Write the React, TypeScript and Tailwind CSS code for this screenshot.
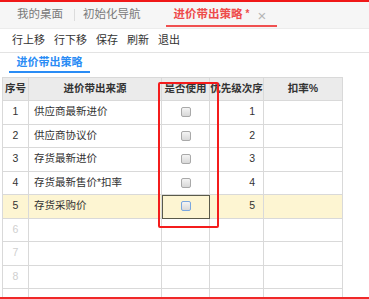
import React from 'react';

const rows = [
    { no: 1, name: '供应商最新进价', order: 1 },
    { no: 2, name: '供应商协议价', order: 2 },
    { no: 3, name: '存货最新进价', order: 3 },
    { no: 4, name: '存货最新售价*扣率', order: 4 },
    { no: 5, name: '存货采购价', order: 5, active: true },
];

const Checkbox: React.FC<{ focused?: boolean }> = ({ focused }) => (
    <span
        className={`block w-[10px] h-[10px] rounded-[2px] border bg-gradient-to-b from-[#f4f4f4] to-[#d8d8d8] ${
            focused ? 'border-[#7aa7e0]' : 'border-[#a9a9a9]'
        }`}
    />
);

const cell = 'border-r border-b border-[#d9d9d9] flex items-center';

export default function App() {
    return (
        <div
            className="relative w-[369px] h-[299px] overflow-hidden bg-white border-t-2 border-[#f01818] text-[#333]"
            style={{ fontFamily: '"Liberation Sans", "Noto Sans CJK SC", sans-serif' }}
        >
            {/* Tabs */}
            <div className="h-[27px] bg-[#f6f6f6] border-b border-[#ececec] flex items-stretch text-[11.5px]">
                <div className="pl-[17px] pr-[11px] flex items-center text-[#7a7a7a]">我的桌面</div>
                <div className="w-px my-[7px] bg-[#dcdcdc]" />
                <div className="pl-[8px] pr-[25px] flex items-center text-[#7a7a7a]">初始化导航</div>
                <div className="relative w-[111px] pl-[8px] flex items-center font-bold text-[#ee4b4b]">
                    进价带出策略
                    <span className="ml-[3px] text-[10px] -mt-[3px]">*</span>
                    <span className="ml-[8px] text-[#b5b5b5] font-normal text-[15px] leading-none">×</span>
                    <div className="absolute left-0 right-0 bottom-[1px] h-[2px] bg-[#f05050]" />
                </div>
            </div>

            {/* Toolbar */}
            <div className="h-[24px] flex items-center gap-[9px] pl-[12px] text-[11px] text-[#333] border-b border-[#e3e3e3]">
                <span>行上移</span>
                <span>行下移</span>
                <span>保存</span>
                <span>刷新</span>
                <span>退出</span>
            </div>

            {/* Sub tab */}
            <div className="h-[24px] pl-[9px] flex items-start">
                <div className="w-[81px] h-[20px] flex items-center justify-center text-[11px] font-bold text-[#2a8cf5] border-b-2 border-[#2a8cf5]">
                    进价带出策略
                </div>
            </div>

            {/* Table */}
            <div className="ml-[2px] w-[341px] grid grid-cols-[26px_133px_48px_54px_79px] border-l border-t border-[#d9d9d9] text-[10.5px]">
                <div className={`${cell} h-[23px] bg-[#ebebeb] justify-center font-bold`}>序号</div>
                <div className={`${cell} h-[23px] bg-[#ebebeb] justify-center font-bold`}>进价带出来源</div>
                <div className={`${cell} h-[23px] bg-[#ebebeb] justify-center font-bold`}>是否使用</div>
                <div className={`${cell} h-[23px] bg-[#ebebeb] justify-center font-bold whitespace-nowrap overflow-hidden`}>优先级次序</div>
                <div className={`${cell} h-[23px] bg-[#ebebeb] justify-center font-bold`}>扣率%</div>

                {rows.map((r) => (
                    <React.Fragment key={r.no}>
                        <div className={`${cell} h-[23.5px] justify-center ${r.active ? 'bg-[#fdf5d2]' : ''}`}>{r.no}</div>
                        <div className={`${cell} h-[23.5px] pl-[5px] ${r.active ? 'bg-[#fdf5d2]' : ''}`}>{r.name}</div>
                        <div
                            className={`${cell} h-[23.5px] justify-center ${
                                r.active ? 'bg-[#fdf5d2] outline outline-1 -outline-offset-1 outline-[#5a5a4a]' : ''
                            }`}
                        >
                            <Checkbox focused={r.active} />
                        </div>
                        <div className={`${cell} h-[23.5px] justify-end pr-[8px] ${r.active ? 'bg-[#fdf5d2]' : ''}`}>{r.order}</div>
                        <div className={`${cell} h-[23.5px] ${r.active ? 'bg-[#fdf5d2]' : ''}`} />
                    </React.Fragment>
                ))}

                {['6', '7', '8', ''].map((n, i) => (
                    <React.Fragment key={i}>
                        <div className={`${cell} h-[23.5px] justify-center text-[#cfcfcf]`}>{n}</div>
                        <div className={`${cell} h-[23.5px]`} />
                        <div className={`${cell} h-[23.5px]`} />
                        <div className={`${cell} h-[23.5px]`} />
                        <div className={`${cell} h-[23.5px]`} />
                    </React.Fragment>
                ))}
            </div>

            {/* Annotation overlays */}
            <div className="absolute left-[158px] top-[80px] w-[61px] h-[146px] border-2 border-[#f41c1c] rounded-[2px] pointer-events-none" />
            <div className="absolute left-0 right-0 top-[295px] h-[2px] bg-[#f02828]" />
            <div className="absolute left-0 right-0 top-[297px] h-[2px] bg-[#fbe3e3]" />
        </div>
    );
}
